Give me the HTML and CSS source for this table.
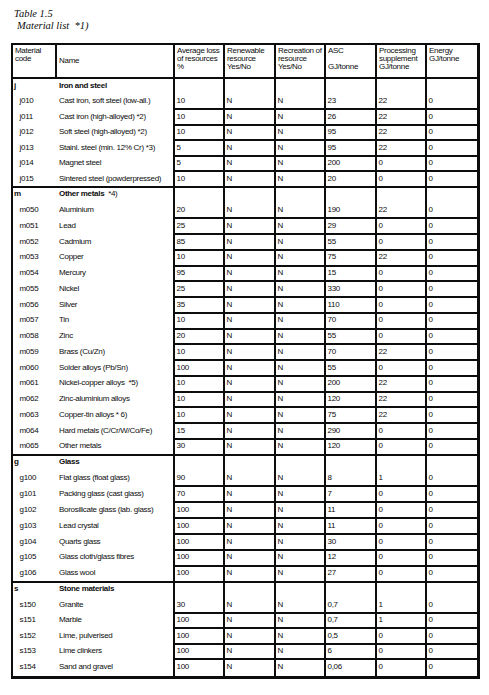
FILE: index.html
```html
<!DOCTYPE html>
<html lang="en">
<head>
<meta charset="utf-8">
<title>Table 1.5 Material list</title>
<link rel="stylesheet" href="styles.css">
</head>
<body>
<div class="page">
  <div class="caption">
    <div class="cap-line">Table 1.5</div>
    <div class="cap-line indent">Material list&nbsp;&nbsp;*1)</div>
  </div>
  <table class="mat">
    <colgroup>
      <col class="w-code"><col class="w-name"><col class="w-50"><col class="w-51"><col class="w-50"><col class="w-51"><col class="w-50"><col class="w-last">
    </colgroup>
    <thead>
      <tr class="hrow">
        <th>Material<br>code</th>
        <th class="mid">Name</th>
        <th>Average loss<br>of resources<br>%</th>
        <th>Renewable<br>resource<br>Yes/No</th>
        <th>Recreation of<br>resource<br>Yes/No</th>
        <th>ASC<br><br>GJ/tonne</th>
        <th>Processing<br>supplement<br>GJ/tonne</th>
        <th class="last">Energy<br>GJ/tonne</th>
      </tr>
    </thead>
    <tbody class="grp-j">
      <tr><td class="code gc">j</td><td class="name gn">Iron and steel</td><td class="num sp" rowspan="2">10</td><td class="num sp" rowspan="2">N</td><td class="num sp" rowspan="2">N</td><td class="num sp" rowspan="2">23</td><td class="num sp" rowspan="2">22</td><td class="num sp last" rowspan="2">0</td></tr>
      <tr><td class="code">j010</td><td class="name">Cast iron, soft steel (low-all.)</td></tr>
      <tr><td class="code">j011</td><td class="name">Cast iron (high-alloyed) *2)</td><td class="num">10</td><td class="num">N</td><td class="num">N</td><td class="num">26</td><td class="num">22</td><td class="num last">0</td></tr>
      <tr><td class="code">j012</td><td class="name">Soft steel (high-alloyed) *2)</td><td class="num">10</td><td class="num">N</td><td class="num">N</td><td class="num">95</td><td class="num">22</td><td class="num last">0</td></tr>
      <tr><td class="code">j013</td><td class="name">Stainl. steel (min. 12% Cr) *3)</td><td class="num">5</td><td class="num">N</td><td class="num">N</td><td class="num">95</td><td class="num">22</td><td class="num last">0</td></tr>
      <tr><td class="code">j014</td><td class="name">Magnet steel</td><td class="num">5</td><td class="num">N</td><td class="num">N</td><td class="num">200</td><td class="num">0</td><td class="num last">0</td></tr>
      <tr><td class="code">j015</td><td class="name">Sintered steel (powderpressed)</td><td class="num">10</td><td class="num">N</td><td class="num">N</td><td class="num">20</td><td class="num">0</td><td class="num last">0</td></tr>
    </tbody>
    <tbody class="grp-m">
      <tr><td class="code gc">m</td><td class="name gn">Other metals <span class="fn">&nbsp;*4)</span></td><td class="num sp" rowspan="2">20</td><td class="num sp" rowspan="2">N</td><td class="num sp" rowspan="2">N</td><td class="num sp" rowspan="2">190</td><td class="num sp" rowspan="2">22</td><td class="num sp last" rowspan="2">0</td></tr>
      <tr><td class="code">m050</td><td class="name">Aluminium</td></tr>
      <tr><td class="code">m051</td><td class="name">Lead</td><td class="num">25</td><td class="num">N</td><td class="num">N</td><td class="num">29</td><td class="num">0</td><td class="num last">0</td></tr>
      <tr><td class="code">m052</td><td class="name">Cadmium</td><td class="num">85</td><td class="num">N</td><td class="num">N</td><td class="num">55</td><td class="num">0</td><td class="num last">0</td></tr>
      <tr><td class="code">m053</td><td class="name">Copper</td><td class="num">10</td><td class="num">N</td><td class="num">N</td><td class="num">75</td><td class="num">22</td><td class="num last">0</td></tr>
      <tr><td class="code">m054</td><td class="name">Mercury</td><td class="num">95</td><td class="num">N</td><td class="num">N</td><td class="num">15</td><td class="num">0</td><td class="num last">0</td></tr>
      <tr><td class="code">m055</td><td class="name">Nickel</td><td class="num">25</td><td class="num">N</td><td class="num">N</td><td class="num">330</td><td class="num">0</td><td class="num last">0</td></tr>
      <tr><td class="code">m056</td><td class="name">Silver</td><td class="num">35</td><td class="num">N</td><td class="num">N</td><td class="num">110</td><td class="num">0</td><td class="num last">0</td></tr>
      <tr><td class="code">m057</td><td class="name">Tin</td><td class="num">10</td><td class="num">N</td><td class="num">N</td><td class="num">70</td><td class="num">0</td><td class="num last">0</td></tr>
      <tr><td class="code">m058</td><td class="name">Zinc</td><td class="num">20</td><td class="num">N</td><td class="num">N</td><td class="num">55</td><td class="num">0</td><td class="num last">0</td></tr>
      <tr><td class="code">m059</td><td class="name">Brass (Cu/Zn)</td><td class="num">10</td><td class="num">N</td><td class="num">N</td><td class="num">70</td><td class="num">22</td><td class="num last">0</td></tr>
      <tr><td class="code">m060</td><td class="name">Solder alloys (Pb/Sn)</td><td class="num">100</td><td class="num">N</td><td class="num">N</td><td class="num">55</td><td class="num">0</td><td class="num last">0</td></tr>
      <tr><td class="code">m061</td><td class="name">Nickel-copper alloys&nbsp; *5)</td><td class="num">10</td><td class="num">N</td><td class="num">N</td><td class="num">200</td><td class="num">22</td><td class="num last">0</td></tr>
      <tr><td class="code">m062</td><td class="name">Zinc-aluminium alloys</td><td class="num">10</td><td class="num">N</td><td class="num">N</td><td class="num">120</td><td class="num">22</td><td class="num last">0</td></tr>
      <tr><td class="code">m063</td><td class="name">Copper-tin alloys * 6)</td><td class="num">10</td><td class="num">N</td><td class="num">N</td><td class="num">75</td><td class="num">22</td><td class="num last">0</td></tr>
      <tr><td class="code">m064</td><td class="name">Hard metals (C/Cr/W/Co/Fe)</td><td class="num">15</td><td class="num">N</td><td class="num">N</td><td class="num">290</td><td class="num">0</td><td class="num last">0</td></tr>
      <tr><td class="code">m065</td><td class="name">Other metals</td><td class="num">30</td><td class="num">N</td><td class="num">N</td><td class="num">120</td><td class="num">0</td><td class="num last">0</td></tr>
    </tbody>
    <tbody class="grp-g">
      <tr><td class="code gc">g</td><td class="name gn">Glass</td><td class="num sp" rowspan="2">90</td><td class="num sp" rowspan="2">N</td><td class="num sp" rowspan="2">N</td><td class="num sp" rowspan="2">8</td><td class="num sp" rowspan="2">1</td><td class="num sp last" rowspan="2">0</td></tr>
      <tr><td class="code">g100</td><td class="name">Flat glass (float glass)</td></tr>
      <tr><td class="code">g101</td><td class="name">Packing glass (cast glass)</td><td class="num">70</td><td class="num">N</td><td class="num">N</td><td class="num">7</td><td class="num">0</td><td class="num last">0</td></tr>
      <tr><td class="code">g102</td><td class="name">Borosilicate glass (lab. glass)</td><td class="num">100</td><td class="num">N</td><td class="num">N</td><td class="num">11</td><td class="num">0</td><td class="num last">0</td></tr>
      <tr><td class="code">g103</td><td class="name">Lead crystal</td><td class="num">100</td><td class="num">N</td><td class="num">N</td><td class="num">11</td><td class="num">0</td><td class="num last">0</td></tr>
      <tr><td class="code">g104</td><td class="name">Quarts glass</td><td class="num">100</td><td class="num">N</td><td class="num">N</td><td class="num">30</td><td class="num">0</td><td class="num last">0</td></tr>
      <tr><td class="code">g105</td><td class="name">Glass cloth/glass fibres</td><td class="num">100</td><td class="num">N</td><td class="num">N</td><td class="num">12</td><td class="num">0</td><td class="num last">0</td></tr>
      <tr><td class="code">g106</td><td class="name">Glass wool</td><td class="num">100</td><td class="num">N</td><td class="num">N</td><td class="num">27</td><td class="num">0</td><td class="num last">0</td></tr>
    </tbody>
    <tbody class="grp-s">
      <tr><td class="code gc">s</td><td class="name gn">Stone materials</td><td class="num sp" rowspan="2">30</td><td class="num sp" rowspan="2">N</td><td class="num sp" rowspan="2">N</td><td class="num sp" rowspan="2">0,7</td><td class="num sp" rowspan="2">1</td><td class="num sp last" rowspan="2">0</td></tr>
      <tr><td class="code">s150</td><td class="name">Granite</td></tr>
      <tr><td class="code">s151</td><td class="name">Marble</td><td class="num">100</td><td class="num">N</td><td class="num">N</td><td class="num">0,7</td><td class="num">1</td><td class="num last">0</td></tr>
      <tr><td class="code">s152</td><td class="name">Lime, pulverised</td><td class="num">100</td><td class="num">N</td><td class="num">N</td><td class="num">0,5</td><td class="num">0</td><td class="num last">0</td></tr>
      <tr><td class="code">s153</td><td class="name">Lime clinkers</td><td class="num">100</td><td class="num">N</td><td class="num">N</td><td class="num">6</td><td class="num">0</td><td class="num last">0</td></tr>
      <tr><td class="code">s154</td><td class="name">Sand and gravel</td><td class="num">100</td><td class="num">N</td><td class="num">N</td><td class="num">0,06</td><td class="num">0</td><td class="num last">0</td></tr>
    </tbody>
  </table>
</div>
</body>
</html>
```
FILE: styles.css
```css
html, body {
  margin: 0;
  padding: 0;
  background: #ffffff;
}

.page {
  padding: 7.5px 0 0 11px;
  color: #0d0d0d;
}

.caption {
  margin-left: 3px;
  font-family: "Liberation Serif", "Times New Roman", serif;
  font-style: italic;
  font-size: 10.5px;
  line-height: 12px;
}

.cap-line.indent {
  margin-left: 3px;
}

.mat {
  margin-top: 11.5px;
  width: 469px;
  table-layout: fixed;
  border-collapse: separate;
  border-spacing: 0;
  border-top: 2px solid #0d0d0d;
  border-left: 2px solid #0d0d0d;
  border-right: 3px solid #0d0d0d;
  border-bottom: 3px solid #0d0d0d;
  font-family: "Liberation Sans", Arial, sans-serif;
  font-size: 8px;
  letter-spacing: -0.3px;
  line-height: 10px;
  color: #0d0d0d;
}

.w-code { width: 44px; }
.w-name { width: 118px; }
.w-50 { width: 50px; }
.w-51 { width: 51px; }
.w-last { width: 50px; }

.mat th,
.mat td {
  box-sizing: border-box;
  padding: 0;
  vertical-align: top;
  text-align: left;
  font-weight: normal;
  white-space: nowrap;
  overflow: hidden;
}

.mat .hrow {
  height: 34px;
}

.mat .hrow th {
  border-right: 2px solid #0d0d0d;
  border-bottom: 2px solid #0d0d0d;
  padding: 2px 0 0 2px;
  line-height: 8px;
}

.mat .hrow th.mid {
  vertical-align: middle;
  padding-top: 0;
}

.mat .hrow th.last {
  border-right: none;
}

.grp-j tr { height: 15.57px; }
.grp-m tr { height: 15.76px; }
.grp-g tr { height: 15.875px; }
.grp-s tr { height: 15.5px; }

.mat td.code {
  padding: 1.5px 0 0 6.5px;
}

.mat td.code.gc {
  padding-left: 1px;
  font-weight: bold;
}

.mat td.name {
  padding: 1.5px 0 0 2px;
  border-right: 2px solid #0d0d0d;
}

.mat td.name.gn {
  font-weight: bold;
}

.mat .fn {
  font-weight: normal;
}

.mat td.num {
  padding: 1.5px 0 0 1.5px;
  border-right: 2px solid #0d0d0d;
  border-bottom: 2px solid #0d0d0d;
}

.mat td.num.sp {
  padding-top: 17px;
}

.mat td.num.last {
  border-right: none;
}

.mat tbody tr:last-child td.code,
.mat tbody tr:last-child td.name {
  border-bottom: 2px solid #0d0d0d;
}

.mat tbody.grp-s tr:last-child td {
  border-bottom: none;
}
```
